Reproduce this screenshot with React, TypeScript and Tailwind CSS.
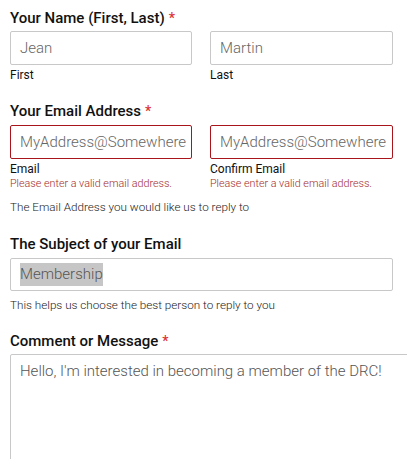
import React from "react";

const font = { fontFamily: "Roboto, 'Liberation Sans', sans-serif" };

function Label({ text, required }: { text: string; required?: boolean }) {
  return (
    <p className="text-[15px] font-medium leading-[18px] text-[#111]">
      {text}
      {required ? <span className="ml-1 text-[14px] text-[#d33]">*</span> : null}
    </p>
  );
}

function Field({
  value,
  error,
  className = "",
}: {
  value: string;
  error?: boolean;
  className?: string;
}) {
  return (
    <div
      className={`flex h-[34px] items-center rounded-[2px] border bg-white px-[9px] text-[15px] font-light text-[#666] ${
        error ? "border-[#a8161c]" : "border-[#c8c8c8]"
      } ${className}`}
    >
      {value}
    </div>
  );
}

export default function App() {
  return (
    <div style={font} className="h-[459px] w-[407px] overflow-hidden bg-white pl-[10px] pt-[9px]">
      <Label text="Your Name (First, Last)" required />
      <div className="mt-[4px] flex gap-[18px]">
        <div className="w-[182px]">
          <Field value="Jean" />
          <p className="mt-[3px] text-[12px] leading-[15px] text-[#111]">First</p>
        </div>
        <div className="w-[183px]">
          <Field value="Martin" />
          <p className="mt-[3px] text-[12px] leading-[15px] text-[#111]">Last</p>
        </div>
      </div>

      <div className="mt-[19px]">
        <Label text="Your Email Address" required />
      </div>
      <div className="mt-[5px] flex gap-[18px]">
        <div className="w-[182px]">
          <Field value="MyAddress@Somewhere" error />
          <p className="mt-[3px] text-[12px] leading-[15px] text-[#111]">Email</p>
          <p className="text-[10.75px] font-light leading-[14px] text-[#a52a2a]">Please enter a valid email address.</p>
        </div>
        <div className="w-[183px]">
          <Field value="MyAddress@Somewhere" error />
          <p className="mt-[3px] text-[12px] leading-[15px] text-[#111]">Confirm Email</p>
          <p className="text-[10.75px] font-light leading-[14px] text-[#a52a2a]">Please enter a valid email address.</p>
        </div>
      </div>
      <p className="mt-[9px] text-[11.7px] font-light leading-[15px] text-[#222]">The Email Address you would like us to reply to</p>

      <div className="mt-[20px]">
        <Label text="The Subject of your Email" />
      </div>
      <div className="mt-[5px] w-[383px]">
        <div className="flex h-[33px] items-center rounded-[2px] border border-[#c8c8c8] bg-white px-[9px] text-[15px] font-light text-[#555]">
          <span className="bg-[#c6c6c6]">Membership</span>
        </div>
      </div>
      <p className="mt-[7px] text-[11.7px] font-light leading-[15px] text-[#222]">This helps us choose the best person to reply to you</p>

      <div className="mt-[19px]">
        <Label text="Comment or Message" required />
      </div>
      <div className="mt-[4px] h-[140px] w-[420px] rounded-[2px] border border-[#c8c8c8] bg-white px-[9px] pt-[6px] text-[15px] font-light leading-[20px] text-[#555]">
        Hello, I'm interested in becoming a member of the DRC!
      </div>
    </div>
  );
}
